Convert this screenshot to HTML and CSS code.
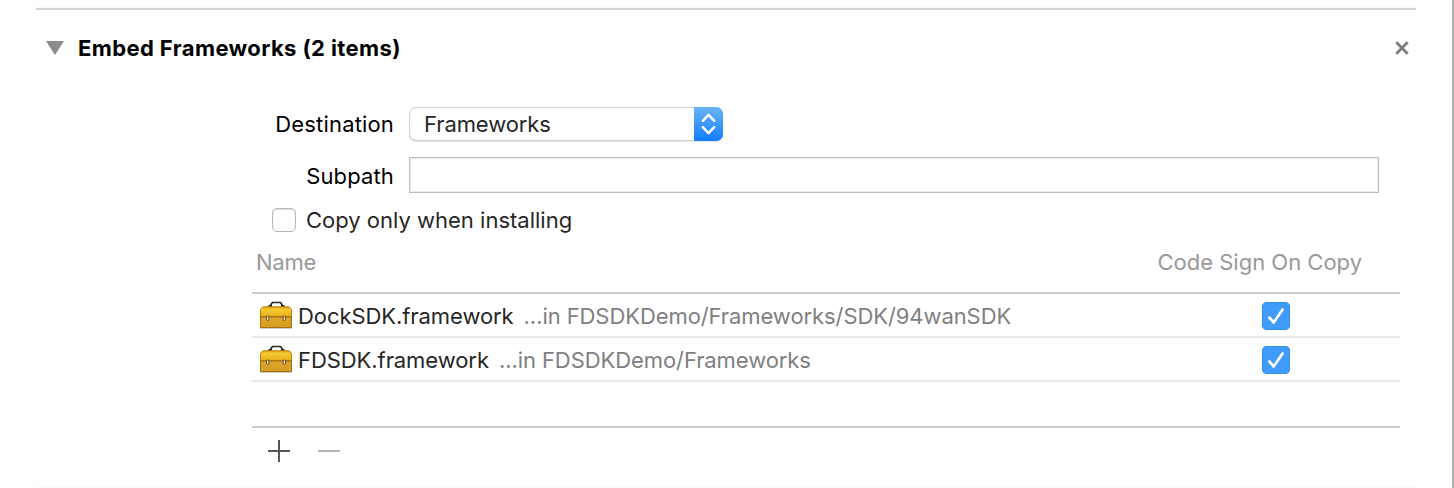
FILE: index.html
```html
<!DOCTYPE html>
<html lang="en">
<head>
<meta charset="utf-8">
<title>Build Phases</title>
<link rel="stylesheet" href="styles.css">
</head>
<body>
<svg width="0" height="0" class="defs">
  <defs>
    <linearGradient id="lid" x1="0" y1="0" x2="0" y2="1"><stop offset="0" stop-color="#e3ac16"/><stop offset=".3" stop-color="#f5cb30"/><stop offset="1" stop-color="#e6ae1c"/></linearGradient>
    <linearGradient id="box" x1="0" y1="0" x2="0" y2="1"><stop offset="0" stop-color="#e2a82c"/><stop offset="1" stop-color="#d39b21"/></linearGradient>
    <symbol id="toolbox" viewBox="0 0 32 28">
      <path d="M11 5V3.500L12.500 1.500h8L22 3.500V5" fill="none" stroke="#252525" stroke-width="1.700"/>
      <path d="M8.500 5h3.500M21 5h3.500" stroke="#252525" stroke-width="1.800"/>
      <path d="M0 26.500h32v1.200H0z" fill="#b9b9b9"/>
      <path d="M.5 15h31v11.500H.5z" fill="url(#box)" stroke="#a96f0d" stroke-width="1"/>
      <path d="M.5 15.500V8.500L2.800 5.800h26.400L31.500 8.500v7z" fill="url(#lid)" stroke="#b9800c" stroke-width="1"/>
      <path d="M0 16h32" stroke="#a66d0c" stroke-width="1.100"/>
      <rect x="6.500" y="15" width="2.400" height="4.500" rx="1.100" fill="#ddd" stroke="#5c451b" stroke-width=".9"/>
      <rect x="23.200" y="15" width="2.400" height="4.500" rx="1.100" fill="#ddd" stroke="#5c451b" stroke-width=".9"/>
    </symbol>
    <symbol id="check" viewBox="0 0 28 28">
      <path d="M7.500 16l4.300 4.700L20.700 7.700" fill="none" stroke="#1f76d0" stroke-opacity=".45" stroke-width="2.600" stroke-linecap="round" stroke-linejoin="round"/>
      <path d="M7.300 15.500l4.400 5L20.600 7.500" fill="none" stroke="#fff" stroke-width="2.700" stroke-linecap="round" stroke-linejoin="round"/>
    </symbol>
  </defs>
</svg>
<main class="panel">
  <section class="phase">
    <header class="phase-head">
      <svg class="disclosure" viewBox="0 0 18 14"><path d="M0 0h18L9 14z" fill="#8c8c8c"/></svg>
      <h1 class="title">Embed Frameworks (2 items)</h1>
      <svg class="close" viewBox="0 0 14 14"><path d="M1.300 1.300l11.400 11.400M12.700 1.300L1.300 12.700" stroke="#7c7c7c" stroke-width="2.800"/></svg>
    </header>
    <div class="form-row destination">
      <span class="label label-dest">Destination</span>
      <div class="select"><span class="value">Frameworks</span>
        <span class="stepper"><svg width="29" height="34" viewBox="0 0 29 34"><path d="M8.800 13.800l5.700-6 5.700 6M8.800 20.200l5.700 6 5.700-6" fill="none" stroke="#fff" stroke-width="2.400" stroke-linecap="round" stroke-linejoin="round"/></svg></span>
      </div>
    </div>
    <div class="form-row subpath">
      <span class="label label-sub">Subpath</span>
      <div class="field"></div>
    </div>
    <div class="option"><span class="checkbox"></span><span class="option-text">Copy only when installing</span></div>
    <div class="table">
      <div class="columns"><span class="col-name">Name</span><span class="col-sign">Code Sign On Copy</span></div>
      <div class="row">
        <svg class="toolbox"><use href="#toolbox"/></svg>
        <span class="file">DockSDK.framework</span><span class="path">...in FDSDKDemo/Frameworks/SDK/94wanSDK</span>
        <svg class="checked"><use href="#check"/></svg>
      </div>
      <div class="row">
        <svg class="toolbox"><use href="#toolbox"/></svg>
        <span class="file">FDSDK.framework</span><span class="path">...in FDSDKDemo/Frameworks</span>
        <svg class="checked"><use href="#check"/></svg>
      </div>
      <div class="empty"></div>
    </div>
    <div class="actions">
      <svg width="22" height="22" viewBox="0 0 22 22"><path d="M10 0h2v22h-2zM0 10h22v2H0z" fill="#555"/></svg>
      <svg width="22" height="22" viewBox="0 0 22 22"><path d="M0 10h22v2H0z" fill="#b4b4b4"/></svg>
    </div>
  </section>
</main>
</body>
</html>
```
FILE: styles.css
```css
* { box-sizing: border-box; }
body { margin: 0; background: #fff; font: 22px/26px Inter, "Liberation Sans", sans-serif; color: #262626; }
svg { display: block; flex: none; }
span, h1 { white-space: nowrap; }
.defs { position: absolute; }
.panel { height: 488px; padding: 6px 36px 0; border-right: 2px solid #b3b3b3; background: #fff; }
.phase { width: 1380px; height: 482px; border-top: 2px solid #fafafa; border-bottom: 2px solid #fafafa; }
.phase-head { display: flex; align-items: center; height: 80px; border-top: 2px solid #d3d3d3; padding: 0 7px 2px 10px; }
.disclosure { width: 18px; height: 14px; margin-right: 14px; }
.title { margin: 0; font-size: 22px; line-height: 26px; font-weight: 700; color: #000; letter-spacing: .39px; }
.close { width: 14px; height: 14px; margin-left: auto; }
.form-row { display: flex; align-items: center; gap: 15px; }
.label { width: 358px; text-align: right; color: #000; }
.label-dest { letter-spacing: .16px; }
.label-sub { padding-top: 2px; letter-spacing: .14px; }
.destination { height: 34px; margin-top: 19px; }
.subpath { height: 36px; margin-top: 16px; }
.select { display: flex; justify-content: space-between; width: 314px; height: 34px; border-radius: 7px; background: #fff; box-shadow: inset 0 0 0 1px #d2d2d2, inset 0 -1px 0 #bcbcbc, 0 1px 1px #e5e5e5; overflow: hidden; }
.value { padding-left: 15px; line-height: 34px; letter-spacing: -.1px; }
.stepper { width: 29px; height: 34px; background: linear-gradient(#6cb4f9, #3d99f8 50%, #137bff); }
.field { width: 970px; height: 36px; border: 1px solid #bdbdbd; box-shadow: inset 0 0 0 1px #ececec; }
.option { display: flex; align-items: center; height: 24px; margin: 15px 0 0 236px; gap: 10px; }
.checkbox { width: 24px; height: 24px; border: 1px solid #b6b6b6; border-radius: 5px; box-shadow: inset 0 1px 1px #ddd; }
.table { width: 1148px; margin-left: 216px; border-bottom: 2px solid #cbcbcb; }
.columns { display: flex; justify-content: space-between; height: 62px; padding: 17px 38px 0 4px; border-bottom: 2px solid #cbcbcb; color: #999; }
.col-name { letter-spacing: -.25px; }
.row { display: flex; align-items: center; height: 44px; padding: 0 110px 0 8px; border-bottom: 2px solid #e9e9e9; }
.toolbox { width: 32px; height: 28px; margin-right: 6px; }
.file { padding-top: 2px; letter-spacing: -.07px; }
.path { padding-top: 2px; margin-left: 10px; color: #808080; letter-spacing: -.08px; }
.checked { width: 28px; height: 28px; margin-left: auto; margin-top: 2px; border-radius: 5px; background: #409bfa; box-shadow: inset 0 0 0 1px #3391f2; }
.empty { height: 44px; }
.actions { display: flex; gap: 28px; padding: 12px 0 0 232px; }
```
